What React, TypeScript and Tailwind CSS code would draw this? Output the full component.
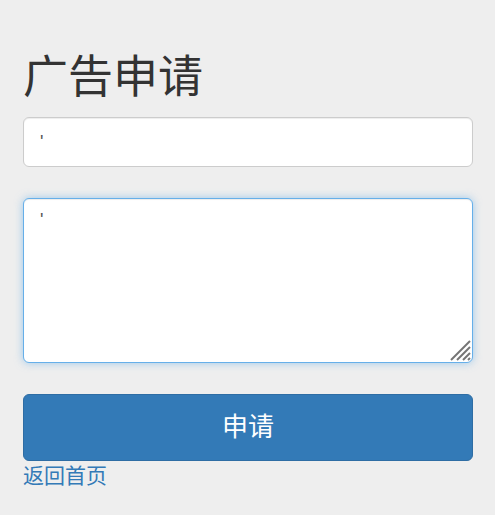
export default function App() {
  return (
    <div className="min-h-[515px] bg-[#eeeeee] pl-[23px] pr-[22px] pt-[47px] font-['Liberation_Sans','Noto_Sans_CJK_SC',sans-serif] text-[#333333]">
      <h1 className="m-0 h-[62px] text-[45px] leading-[62px] font-normal">广告申请</h1>
      <div className="mt-[8px] flex flex-col">
        <input
          defaultValue="'"
          className="h-[50px] w-full rounded-[6px] border border-[#cccccc] bg-white px-[16px] text-[18px] text-[#555555] shadow-[inset_0_1px_1px_rgba(0,0,0,0.075)] outline-none"
        />
        <div className="relative mt-[31px]">
          <textarea
            defaultValue="'"
            className="block h-[165px] w-full resize-none rounded-[6px] border border-[#66afe9] bg-white px-[16px] py-[8px] text-[18px] text-[#555555] shadow-[inset_0_1px_1px_rgba(0,0,0,0.075),0_0_8px_rgba(102,175,233,0.6)] outline-none"
          />
          {/* resize grip */}
          <svg
            className="pointer-events-none absolute bottom-[2px] right-[2px]"
            width="22"
            height="22"
            viewBox="0 0 22 22"
          >
            <g stroke="#757575" strokeWidth="2">
              <line x1="2" y1="21" x2="21" y2="2" />
              <line x1="8" y1="21" x2="21" y2="8" />
              <line x1="14" y1="21" x2="21" y2="14" />
              <line x1="19" y1="21" x2="21" y2="19" />
            </g>
          </svg>
        </div>
        <button className="mt-[31px] h-[67px] w-full rounded-[6px] border border-[#2e6da4] bg-[#337ab7] text-[26px] text-white">
          申请
        </button>
        <a href="#" className="mt-[1px] self-start text-[21px] leading-[28px] text-[#337ab7]">
          返回首页
        </a>
      </div>
    </div>
  );
}
